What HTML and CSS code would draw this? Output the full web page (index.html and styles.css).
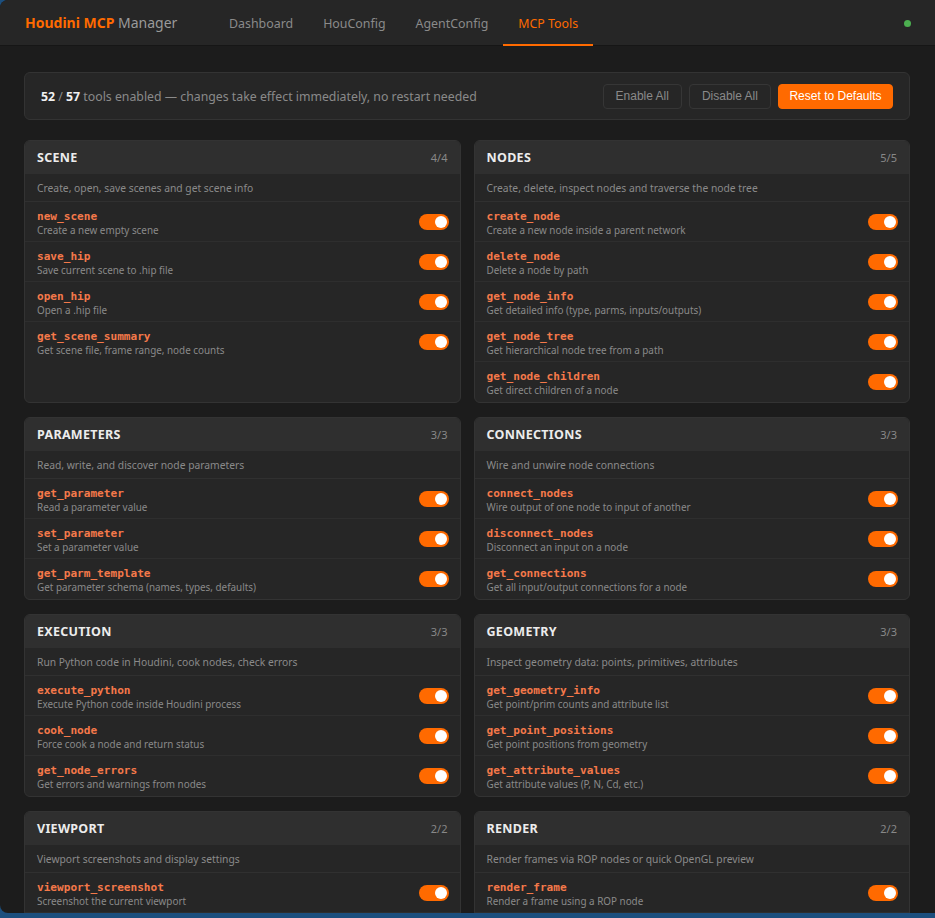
FILE: index.html
```html
<!DOCTYPE html>
<html lang="en">
<head>
    <meta charset="UTF-8">
    <meta name="viewport" content="width=device-width, initial-scale=1.0">
    <title>Houdini MCP Manager</title>
    <link rel="stylesheet" href="styles.css">
</head>
<body>
    <div class="window">
        <header class="topbar">
            <div class="brand"><span class="brand-accent">Houdini MCP</span> Manager</div>
            <nav class="nav">
                <a class="nav-item">Dashboard</a>
                <a class="nav-item">HouConfig</a>
                <a class="nav-item">AgentConfig</a>
                <a class="nav-item active">MCP Tools</a>
            </nav>
            <span class="status-dot"></span>
        </header>

        <main class="main">
            <div class="summary">
                <div class="summary-text"><b>52</b> / <b>57</b> tools enabled — changes take effect immediately, no restart needed</div>
                <div class="summary-actions">
                    <button class="btn">Enable All</button>
                    <button class="btn">Disable All</button>
                    <button class="btn btn-primary">Reset to Defaults</button>
                </div>
            </div>
            <div id="groups" class="groups"></div>
        </main>
    </div>

    <script>
        const groups = [
            { name: 'Scene', desc: 'Create, open, save scenes and get scene info', tools: [
                ['new_scene', 'Create a new empty scene'],
                ['save_hip', 'Save current scene to .hip file'],
                ['open_hip', 'Open a .hip file'],
                ['get_scene_summary', 'Get scene file, frame range, node counts']
            ]},
            { name: 'Nodes', desc: 'Create, delete, inspect nodes and traverse the node tree', tools: [
                ['create_node', 'Create a new node inside a parent network'],
                ['delete_node', 'Delete a node by path'],
                ['get_node_info', 'Get detailed info (type, parms, inputs/outputs)'],
                ['get_node_tree', 'Get hierarchical node tree from a path'],
                ['get_node_children', 'Get direct children of a node']
            ]},
            { name: 'Parameters', desc: 'Read, write, and discover node parameters', tools: [
                ['get_parameter', 'Read a parameter value'],
                ['set_parameter', 'Set a parameter value'],
                ['get_parm_template', 'Get parameter schema (names, types, defaults)']
            ]},
            { name: 'Connections', desc: 'Wire and unwire node connections', tools: [
                ['connect_nodes', 'Wire output of one node to input of another'],
                ['disconnect_nodes', 'Disconnect an input on a node'],
                ['get_connections', 'Get all input/output connections for a node']
            ]},
            { name: 'Execution', desc: 'Run Python code in Houdini, cook nodes, check errors', tools: [
                ['execute_python', 'Execute Python code inside Houdini process'],
                ['cook_node', 'Force cook a node and return status'],
                ['get_node_errors', 'Get errors and warnings from nodes']
            ]},
            { name: 'Geometry', desc: 'Inspect geometry data: points, primitives, attributes', tools: [
                ['get_geometry_info', 'Get point/prim counts and attribute list'],
                ['get_point_positions', 'Get point positions from geometry'],
                ['get_attribute_values', 'Get attribute values (P, N, Cd, etc.)']
            ]},
            { name: 'Viewport', desc: 'Viewport screenshots and display settings', tools: [
                ['viewport_screenshot', 'Screenshot the current viewport'],
                ['set_display_flag', 'Set display and render flags on a node']
            ]},
            { name: 'Render', desc: 'Render frames via ROP nodes or quick OpenGL preview', tools: [
                ['render_frame', 'Render a frame using a ROP node'],
                ['opengl_preview', 'Quick OpenGL flipbook preview']
            ]}
        ];

        const container = document.getElementById('groups');

        groups.forEach(group => {
            const card = document.createElement('section');
            card.className = 'group';
            let html = `
                <div class="group-head">
                    <span class="group-title">${group.name}</span>
                    <span class="group-count">${group.tools.length}/${group.tools.length}</span>
                </div>
                <div class="group-desc">${group.desc}</div>`;
            group.tools.forEach(([name, desc]) => {
                html += `
                <div class="tool">
                    <div class="tool-info">
                        <div class="tool-name">${name}</div>
                        <div class="tool-desc">${desc}</div>
                    </div>
                    <label class="switch"><input type="checkbox" checked><span class="slider"></span></label>
                </div>`;
            });
            card.innerHTML = html;
            container.appendChild(card);
        });
    </script>
</body>
</html>
```

FILE: styles.css
```css
html, body {
    margin: 0;
    height: 100%;
}
body {
    background-color: #1c4f7e;
    font-family: "Segoe UI", "Noto Sans", sans-serif;
    overflow: hidden;
}
.window {
    height: 913px;
    background-color: #1c1c1c;
    border-radius: 8px 0 0 8px;
    overflow: hidden;
    display: flex;
    flex-direction: column;
}
.topbar {
    height: 45px;
    flex-shrink: 0;
    background-color: #262626;
    border-bottom: 1px solid #161616;
    display: flex;
    align-items: center;
    padding: 0 24px 0 25px;
}
.brand {
    font-size: 14px;
    color: #9a9a9a;
    width: 189px;
}
.brand-accent {
    color: #ff6a00;
    font-weight: bold;
}
.nav {
    display: flex;
    align-self: stretch;
    flex: 1;
}
.nav-item {
    display: flex;
    align-items: center;
    padding: 2px 15px 0;
    font-size: 12.4px;
    color: #8a8a8a;
    border-bottom: 2px solid transparent;
    margin-bottom: -1px;
}
.nav-item.active {
    color: #ff6a00;
    border-bottom-color: #ff6a00;
}
.status-dot {
    width: 7px;
    height: 7px;
    border-radius: 50%;
    background-color: #4caf50;
    margin-top: 2px;
}
.main {
    flex: 1;
    overflow: hidden;
    padding: 26px 25px 0 24px;
}
.summary {
    height: 46px;
    background-color: #262626;
    border: 1px solid #333;
    border-radius: 6px;
    display: flex;
    align-items: center;
    justify-content: space-between;
    padding: 0 16px;
    margin-bottom: 20px;
}
.summary-text {
    font-size: 12.3px;
    color: #8a8a8a;
}
.summary-text b {
    color: #f0f0f0;
}
.summary-actions {
    display: flex;
    gap: 7px;
}
.btn {
    font-family: "Liberation Sans", Arial, sans-serif;
    font-size: 12px;
    height: 25px;
    padding: 0 12px;
    background-color: #262626;
    color: #8a8a8a;
    border: 1px solid #363636;
    border-radius: 4px;
}
.btn-primary {
    padding: 0 10.5px;
    background-color: #ff6a00;
    border-color: #ff6a00;
    color: #fff;
}
.groups {
    display: grid;
    grid-template-columns: 1fr 1fr;
    gap: 14px 13px;
}
.group {
    background-color: #262626;
    border: 1px solid #333;
    border-radius: 6px;
    overflow: hidden;
}
.group-head {
    height: 33px;
    background-color: #2f2f2f;
    display: flex;
    align-items: center;
    justify-content: space-between;
    padding: 0 12px;
}
.group-title {
    font-size: 12.5px;
    font-weight: bold;
    color: #ececec;
    text-transform: uppercase;
    letter-spacing: 0.3px;
}
.group-count {
    font-size: 11px;
    color: #888;
}
.group-desc {
    height: 27px;
    display: flex;
    align-items: center;
    padding: 0 12px;
    font-size: 10.3px;
    color: #8a8a8a;
    border-bottom: 1px solid #303030;
}
.tool {
    height: 40px;
    box-sizing: border-box;
    display: flex;
    align-items: center;
    justify-content: space-between;
    padding: 3px 11px 0 12px;
    border-bottom: 1px solid #2e2e2e;
}
.tool:last-child {
    border-bottom-color: transparent;
}
.tool-name {
    font-family: "DejaVu Sans Mono", "Liberation Mono", monospace;
    font-weight: bold;
    font-size: 11.1px;
    color: #f5794a;
    line-height: 13px;
}
.tool-desc {
    font-size: 9.9px;
    color: #8a8a8a;
    line-height: 14px;
}
.switch {
    position: relative;
    width: 30px;
    height: 16px;
    flex-shrink: 0;
    margin-top: -3px;
}
.switch input {
    display: none;
}
.slider {
    position: absolute;
    inset: 0;
    background-color: #444;
    border-radius: 8px;
}
.slider::before {
    content: "";
    position: absolute;
    left: 2px;
    top: 2px;
    width: 12px;
    height: 12px;
    border-radius: 50%;
    background-color: #fff;
}
.switch input:checked + .slider {
    background-color: #ff6a00;
}
.switch input:checked + .slider::before {
    left: 16px;
}
```
